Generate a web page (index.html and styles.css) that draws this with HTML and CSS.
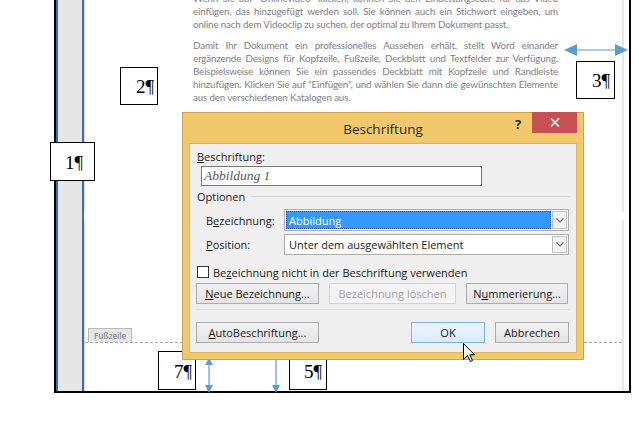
FILE: index.html
```html
<!DOCTYPE html>
<html lang="de">
<head>
<meta charset="utf-8">
<title>Beschriftung</title>
<link rel="stylesheet" href="styles.css">
</head>
<body>
<div class="stage">
  <div class="frame">
    <div class="rail"></div>
    <div class="page">
      <div class="sheet sheet-top">
        <div class="doc-text">
          <p>
            <span class="ln">Wenn Sie auf "Onlinevideo" klicken, können Sie den Einbettungscode für das Video</span>
            <span class="ln">einfügen, das hinzugefügt werden soll. Sie können auch ein Stichwort eingeben, um</span>
            <span class="ln last">online nach dem Videoclip zu suchen, der optimal zu Ihrem Dokument passt.</span>
          </p>
          <p>
            <span class="ln">Damit Ihr Dokument ein professionelles Aussehen erhält, stellt Word einander</span>
            <span class="ln">ergänzende Designs für Kopfzeile, Fußzeile, Deckblatt und Textfelder zur Verfügung.</span>
            <span class="ln">Beispielsweise können Sie ein passendes Deckblatt mit Kopfzeile und Randleiste</span>
            <span class="ln">hinzufügen. Klicken Sie auf "Einfügen", und wählen Sie dann die gewünschten Elemente</span>
            <span class="ln last">aus den verschiedenen Katalogen aus.</span>
          </p>
        </div>
      </div>
      <div class="sheet sheet-bottom">
        <div class="footer-tab">Fußzeile</div>
        <div class="footer-line"></div>
      </div>
    </div>
  </div>

  <div class="num n1">1¶</div>
  <div class="num n2">2¶</div>
  <div class="num n3">3¶</div>
  <div class="num n7">7¶</div>
  <div class="num n5">5¶</div>

  <svg class="arrow arrow-h" width="64" height="14" viewBox="0 0 64 14">
    <line x1="10" y1="7" x2="54" y2="7" stroke="#5b9bd5" stroke-width="1.2"/>
    <polygon points="0,7 13,1 13,13" fill="#5b9bd5"/>
    <polygon points="64,7 51,1 51,13" fill="#5b9bd5"/>
  </svg>
  <svg class="arrow arrow-v1" width="10" height="35" viewBox="0 0 10 35">
    <line x1="5" y1="4" x2="5" y2="31" stroke="#5b9bd5" stroke-width="1.2"/>
    <polygon points="5,0 1,7 9,7" fill="#5b9bd5"/>
    <polygon points="5,35 1,27 9,27" fill="#5b9bd5"/>
  </svg>
  <svg class="arrow arrow-v2" width="10" height="41" viewBox="0 0 10 41">
    <line x1="5" y1="0" x2="5" y2="37" stroke="#5b9bd5" stroke-width="1.2"/>
    <polygon points="5,41 1,33 9,33" fill="#5b9bd5"/>
  </svg>

  <div class="dialog">
    <div class="titlebar">
      <span class="title">Beschriftung</span>
      <span class="help">?</span>
      <span class="close">
        <svg width="10" height="9" viewBox="0 0 10 9"><path d="M1 0.5 L9 8.5 M9 0.5 L1 8.5" stroke="#fff" stroke-width="1.6"/></svg>
      </span>
    </div>
    <div class="panel">
      <div class="lbl-top"><u>B</u>eschriftung:</div>
      <div class="textbox">Abbildung 1</div>
      <div class="group"><span>Optionen</span><span class="rule"></span></div>
      <div class="field f1">
        <span>B<u>e</u>zeichnung:</span>
        <div class="combo">
          <span class="val sel">Abbildung</span>
          <span class="drop"><svg width="8" height="5" viewBox="0 0 8 5"><path d="M0.5 0.5 L4 4 L7.5 0.5" fill="none" stroke="#6d6d6d" stroke-width="1.2"/></svg></span>
        </div>
      </div>
      <div class="field f2">
        <span><u>P</u>osition:</span>
        <div class="combo">
          <span class="val">Unter dem ausgewählten Element</span>
          <span class="drop"><svg width="8" height="5" viewBox="0 0 8 5"><path d="M0.5 0.5 L4 4 L7.5 0.5" fill="none" stroke="#6d6d6d" stroke-width="1.2"/></svg></span>
        </div>
      </div>
      <div class="check-row"><span class="box"></span><span>Be<u>z</u>eichnung nicht in der Beschriftung verwenden</span></div>
      <div class="btn-row">
        <span class="btn w123"><u>N</u>eue Bezeichnung...</span>
        <span class="btn w127 disabled">Bezeichnung löschen</span>
        <span class="btn w102">N<u>u</u>mmerierung...</span>
      </div>
      <div class="sep"></div>
      <div class="btn-row">
        <span class="btn w123"><u>A</u>utoBeschriftung...</span>
        <span class="btn w74 primary">OK</span>
        <span class="btn w74">Abbrechen</span>
      </div>
    </div>
  </div>

  <svg class="cursor" width="13" height="20" viewBox="0 0 13 20">
    <path d="M0.5 0.5 L0.5 16.5 L4.5 12.5 L7.5 18.5 L9.5 17.5 L6.8 11.8 L11.5 11.8 Z" fill="#fff" stroke="#000" stroke-width="1"/>
  </svg>
</div>
</body>
</html>
```

FILE: styles.css
```css
html, body {
  margin: 0;
  padding: 0;
  background: #fff;
}

.stage {
  position: relative;
  width: 639px;
  height: 429px;
  overflow: hidden;
}

.frame {
  margin-left: 54px;
  width: 577px;
  height: 393px;
  box-sizing: border-box;
  border-left: 2px solid #000;
  border-right: 2px solid #000;
  border-bottom: 2px solid #000;
  display: flex;
}

.rail {
  width: 28px;
  box-sizing: border-box;
  border-left: 2px solid #3e6fa3;
  border-right: 2px solid #3e6fa3;
  background: #e6e6e6;
}

.page {
  flex: 1;
  display: flex;
  flex-direction: column;
  gap: 8px;
  padding-right: 5px;
}

.sheet {
  border-left: 1px solid #dedede;
  border-right: 2px solid #e8e8e8;
}

.sheet-top {
  height: 212px;
  overflow: hidden;
}

.sheet-bottom {
  flex: 1;
  display: flex;
  flex-direction: column;
  align-items: flex-start;
  padding-top: 108px;
}

.doc-text {
  margin-top: -8px;
  margin-left: 108px;
  width: 365px;
  font-family: Lato, "Liberation Sans", sans-serif;
  font-size: 9.8px;
  letter-spacing: -0.15px;
  line-height: 13px;
  color: #808080;
}

.doc-text p {
  margin: 0 0 8px 0;
}

.ln {
  display: block;
  text-align: justify;
  text-align-last: justify;
  white-space: nowrap;
}

.ln.last {
  text-align-last: left;
}

.footer-tab {
  margin-left: 3px;
  height: 14px;
  box-sizing: border-box;
  padding: 0 5px;
  background: #e6e6e6;
  border: 1px solid #b9b9b9;
  border-bottom: none;
  font-family: "Open Sans", sans-serif;
  font-size: 8px;
  font-weight: 600;
  line-height: 13px;
  color: #8a8a8a;
}

.footer-line {
  align-self: stretch;
  border-top: 1px dashed #a6a6a6;
}

/* annotation boxes */
.num {
  position: absolute;
  box-sizing: border-box;
  background: #fff;
  border: 1px solid #000;
  display: flex;
  align-items: center;
  justify-content: flex-end;
  padding: 2px 3px 0 0;
  font-family: "Liberation Serif", serif;
  font-size: 19px;
  color: #000;
}

.n1 { left: 50px; top: 142px; width: 45px; height: 39px; padding-right: 11px; }
.n2 { left: 120px; top: 67px; width: 38px; height: 38px; }
.n3 { left: 576px; top: 61px; width: 39px; height: 38px; padding-right: 4px; }
.n7 { left: 158px; top: 351px; width: 38px; height: 39px; }
.n5 { left: 289px; top: 351px; width: 38px; height: 39px; padding-right: 4px; }

.arrow {
  position: absolute;
}
.arrow-h { left: 564px; top: 43px; }
.arrow-v1 { left: 204px; top: 358px; }
.arrow-v2 { left: 271px; top: 352px; }

/* dialog */
.dialog {
  position: absolute;
  left: 182px;
  top: 112px;
  width: 402px;
  height: 248px;
  box-sizing: border-box;
  background: #f1c86c;
  border: 1px solid #c9a352;
  padding: 0 6px 6px 6px;
  display: flex;
  flex-direction: column;
  font-family: "Open Sans", sans-serif;
  font-size: 11px;
  color: #1a1a1a;
  z-index: 5;
}

.titlebar {
  position: relative;
  height: 30px;
  display: flex;
  align-items: center;
  justify-content: center;
}

.title {
  font-size: 13.5px;
  color: #2b2b2b;
  margin-top: 1px;
}

.help {
  position: absolute;
  left: 326px;
  top: 2px;
  font-weight: 700;
  font-size: 13px;
  color: #2b2b2b;
}

.close {
  position: absolute;
  right: 0;
  top: -1px;
  width: 45px;
  height: 21px;
  background: #c75050;
  display: flex;
  align-items: center;
  justify-content: center;
}

.panel {
  flex: 1;
  background: #efefef;
  border: 1px solid #d8b562;
  padding: 0 7px 0 6px;
  display: flex;
  flex-direction: column;
}

.lbl-top {
  margin-top: 5px;
  height: 16px;
  line-height: 16px;
  padding-left: 1px;
}

.textbox {
  margin: 1px 0 0 5px;
  width: 281px;
  height: 20px;
  box-sizing: border-box;
  border: 1px solid #7a7a7a;
  background: #fff;
  padding-left: 2px;
  font-family: "Liberation Serif", serif;
  font-style: italic;
  font-size: 13.5px;
  line-height: 18px;
  color: #5a5a5a;
}

.group {
  margin-top: 2px;
  height: 16px;
  display: flex;
  align-items: center;
  padding-left: 1px;
}

.rule {
  flex: 1;
  margin-left: 6px;
  margin-right: -1px;
  border-top: 1px solid #d6d6d6;
}

.field {
  display: grid;
  grid-template-columns: 78px 1fr;
  align-items: center;
  padding-left: 10px;
}
.f1 { margin-top: 5px; height: 22px; }
.f2 { margin-top: 3px; height: 21px; }

.combo {
  height: 100%;
  box-sizing: border-box;
  border: 1px solid #acacac;
  background: #fff;
  display: flex;
  padding: 1px;
}

.val {
  flex: 1;
  padding-left: 3px;
  display: flex;
  align-items: center;
}

.val.sel {
  background: #3399ff;
  color: #fff;
  outline: 1px dotted #1c4f86;
  outline-offset: -1px;
}

.drop {
  width: 15px;
  margin-left: 1px;
  box-sizing: border-box;
  border: 1px solid #c2c2c2;
  background: #f2f2f2;
  display: flex;
  align-items: center;
  justify-content: center;
}

.check-row {
  margin-top: 10px;
  height: 14px;
  display: flex;
  align-items: center;
  padding-left: 1px;
  gap: 4px;
}

.box {
  width: 12px;
  height: 12px;
  box-sizing: border-box;
  border: 1px solid #333;
  background: #fff;
}

.btn-row {
  margin-top: 4px;
  height: 21px;
  display: flex;
  gap: 10px;
}
.sep + .btn-row {
  margin-top: 12px;
}

.btn {
  box-sizing: border-box;
  height: 21px;
  border: 1px solid #adadad;
  background: linear-gradient(#f1f1f1, #e4e4e4);
  display: flex;
  align-items: center;
  justify-content: center;
  color: #1a1a1a;
}

.btn.disabled {
  color: #a3a3a3;
  border-color: #d3d3d3;
  background: #f3f3f3;
}

.btn.primary {
  border-color: #7eb4ea;
  background: linear-gradient(#ecf4fc, #dcecfc);
  margin-left: auto;
}

.w123 { width: 123px; }
.w127 { width: 127px; }
.w102 { width: 102px; }
.w74 { width: 74px; }

.sep {
  margin-top: 5px;
  margin-right: -1px;
  border-top: 1px solid #dcdcdc;
}

.cursor {
  position: absolute;
  left: 463px;
  top: 343px;
  z-index: 10;
}
```
